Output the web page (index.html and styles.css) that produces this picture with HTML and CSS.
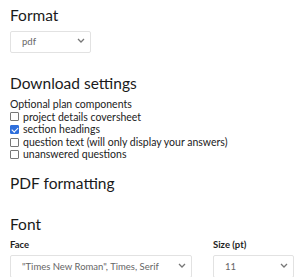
FILE: index.html
```html
<!DOCTYPE html>
<html>
<head>
<meta charset="utf-8">
<link rel="stylesheet" href="styles.css">
</head>
<body>
<main class="page">
  <h2 class="heading h-format">Format</h2>
  <div class="select-wrap w-format">
    <select class="select"><option>pdf</option></select>
    <svg class="chev" width="8" height="5" viewBox="0 0 8 5"><path d="M1 1l3 3 3-3" fill="none" stroke="#777" stroke-width="1.3"/></svg>
  </div>

  <h2 class="heading h-download">Download settings</h2>
  <div class="group">
    <div class="group-label">Optional plan components</div>
    <label class="check"><input type="checkbox" class="box"><span>project details coversheet</span></label>
    <label class="check"><input type="checkbox" class="box" checked><span>section headings</span></label>
    <label class="check"><input type="checkbox" class="box"><span>question text (will only display your answers)</span></label>
    <label class="check"><input type="checkbox" class="box"><span>unanswered questions</span></label>
  </div>

  <h2 class="heading h-pdf">PDF formatting</h2>
  <h2 class="heading h-font">Font</h2>

  <div class="font-row">
    <div class="field face">
      <div class="field-label">Face</div>
      <div class="select-wrap">
        <select class="select"><option>"Times New Roman", Times, Serif</option></select>
        <svg class="chev" width="8" height="5" viewBox="0 0 8 5"><path d="M1 1l3 3 3-3" fill="none" stroke="#777" stroke-width="1.3"/></svg>
      </div>
    </div>
    <div class="field size">
      <div class="field-label">Size (pt)</div>
      <div class="select-wrap">
        <select class="select"><option>11</option></select>
        <svg class="chev" width="8" height="5" viewBox="0 0 8 5"><path d="M1 1l3 3 3-3" fill="none" stroke="#777" stroke-width="1.3"/></svg>
      </div>
    </div>
  </div>
</main>
</body>
</html>
```
FILE: styles.css
```css
* { box-sizing: border-box; }
html, body { margin: 0; padding: 0; background: #fff; }
body {
  font-family: Lato, "Noto Sans", sans-serif;
  color: #222;
  overflow: hidden;
}
.page {
  padding: 0 6px 0 10px;
  width: 300px;
}
.heading {
  margin: 0;
  font-weight: 400;
  font-size: 15.5px;
  line-height: 18px;
  color: #1a1a1a;
}
.h-format { padding-top: 6px; }
.h-download { margin-top: 23px; }
.h-pdf { margin-top: 13px; }
.h-font { margin-top: 23px; }

.select-wrap {
  position: relative;
  height: 23px;
}
.w-format { width: 81px; height: 22px; margin-top: 5px; }
.select {
  -webkit-appearance: none;
  appearance: none;
  width: 100%;
  height: 100%;
  border: 1px solid #e2e2e2;
  border-radius: 2px;
  background: #fff;
  font-family: inherit;
  font-size: 9.5px;
  color: #666;
  padding: 0 0 0 11px;
  margin: 0;
  outline: none;
}
.chev {
  position: absolute;
  right: 6px;
  top: 9px;
}

.group {
  margin-top: 6px;
  font-size: 10.5px;
  line-height: 12.6px;
  color: #222;
}
.check {
  display: flex;
  align-items: center;
  gap: 4px;
  height: 12.6px;
}
.box {
  -webkit-appearance: none;
  appearance: none;
  width: 9px;
  height: 9px;
  margin: 0;
  border: 1px solid #777;
  border-radius: 1px;
  background: #fff;
  flex: none;
  position: relative;
}
.box:checked {
  background: #2f6fdc;
  border-color: #2f6fdc;
}
.box:checked::after {
  content: "";
  position: absolute;
  left: 2px;
  top: 0px;
  width: 2.5px;
  height: 5px;
  border: solid #fff;
  border-width: 0 1.3px 1.3px 0;
  transform: rotate(45deg);
}

.font-row {
  display: flex;
  gap: 21px;
  margin-top: 6px;
}
.field-label {
  font-size: 9.5px;
  font-weight: 700;
  line-height: 12px;
  margin-bottom: 3px;
  color: #222;
}
.face { width: 182px; }
.size { width: 81px; }
```
